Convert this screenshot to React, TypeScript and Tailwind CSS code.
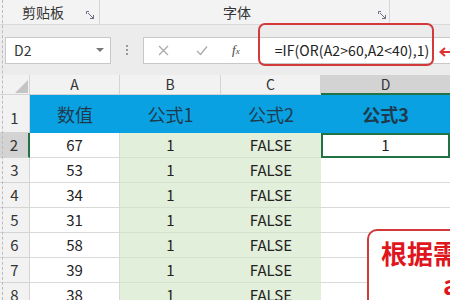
import React from 'react';

const rows = [
  { n: 2, a: '67' },
  { n: 3, a: '53' },
  { n: 4, a: '34' },
  { n: 5, a: '31' },
  { n: 6, a: '58' },
  { n: 7, a: '39' },
  { n: 8, a: '38' },
];

const Launcher = () => (
  <svg width="9" height="9" viewBox="0 0 9 9" className="text-gray-500">
    <path d="M0.5 3V0.5H3" fill="none" stroke="currentColor" />
    <path d="M2 2L7.5 7.5M4 7.5H7.5V4" fill="none" stroke="currentColor" />
  </svg>
);

export default function App() {
  return (
    <div className="relative w-[450px] h-[300px] overflow-hidden bg-white font-['Noto_Sans_CJK_SC','Noto_Sans',sans-serif] text-[#222]">
      {/* ribbon */}
      <div className="grid grid-cols-[22px_64px_14px_123px_155px_12px] items-center h-[25px] bg-[#f3f3f3] border-b border-[#dadada]">
        <div />
        <span className="text-[14px] text-[#333] leading-none">剪贴板</span>
        <span className="self-stretch flex items-end pb-[4px] border-r border-[#d6d6d6]"><Launcher /></span>
        <div />
        <span className="text-[14px] text-[#333] leading-none">字体</span>
        <span className="self-stretch flex items-end pb-[4px] border-r border-[#d6d6d6]"><Launcher /></span>
      </div>

      {/* formula bar */}
      <div className="flex items-center h-[50px] bg-[#ececec] pl-[5px]">
        <div className="w-[106px] h-[27px] bg-white border border-[#c8c8c8] flex items-center pl-[8px] pr-[6px]">
          <span className="text-[14px] text-[#333]">D2</span>
          <span className="ml-auto w-0 h-0 border-l-[4px] border-r-[4px] border-t-[4px] border-l-transparent border-r-transparent border-t-[#777]" />
        </div>
        <div className="w-[32px] flex flex-col items-center gap-[2px]">
          <span className="w-[2px] h-[2px] bg-[#999]" />
          <span className="w-[2px] h-[2px] bg-[#999]" />
          <span className="w-[2px] h-[2px] bg-[#999]" />
        </div>
        <div className="flex-1 h-[27px] bg-white border border-[#c8c8c8] border-r-0 flex items-center">
          <svg width="11" height="11" viewBox="0 0 11 11" className="ml-[14px]">
            <path d="M1 1L10 10M10 1L1 10" stroke="#aaa" strokeWidth="1.3" />
          </svg>
          <svg width="12" height="11" viewBox="0 0 12 11" className="ml-[27px]">
            <path d="M1 6L4.5 9.5L11 1.5" fill="none" stroke="#aaa" strokeWidth="1.3" />
          </svg>
          <span className="ml-[24px] text-[13px] italic font-['Liberation_Serif',serif] text-[#444]">f<span className="text-[9px]">x</span></span>
          <span className="ml-[35px] text-[14px] text-[#222] tracking-[0.1px]">=IF(OR(A2&gt;60,A2&lt;40),1)</span>
        </div>
      </div>

      {/* sheet */}
      <div className="grid grid-cols-[30px_90px_101px_100px_129px] grid-rows-[20px_38px_repeat(7,25px)]">
        <div className="bg-[#f2f2f2] border-r border-b border-[#d4d4d4]" />
        {['A', 'B', 'C'].map((c) => (
          <div key={c} className="bg-[#f2f2f2] border-r border-b border-[#d4d4d4] flex items-center justify-center text-[14px] text-[#333]">{c}</div>
        ))}
        <div className="bg-[#d3d3d3] border-b-2 border-[#217346] flex items-center justify-center text-[14px] text-[#333]">D</div>

        {/* row 1 */}
        <div className="bg-[#f2f2f2] border-r border-b border-[#d4d4d4] flex items-end justify-center pb-[3px] text-[15px] text-[#333]">1</div>
        <div className="bg-[#0aa1e2] flex items-center justify-center text-[18px] text-[#1d3b4d]">数值</div>
        <div className="bg-[#0aa1e2] flex items-center justify-center text-[18px] text-[#1d3b4d]">公式1</div>
        <div className="bg-[#0aa1e2] flex items-center justify-center text-[18px] text-[#1d3b4d]">公式2</div>
        <div className="bg-[#0aa1e2] flex items-center justify-center text-[18px] font-bold text-[#1d3b4d]">公式3</div>

        {rows.map((r) => (
          <React.Fragment key={r.n}>
            <div className={`${r.n === 2 ? 'bg-[#d3d3d3] border-r-2 border-r-[#217346]' : 'bg-[#f2f2f2] border-r border-r-[#d4d4d4]'} border-b border-b-[#d4d4d4] flex items-end justify-center pb-[1px] text-[15px] text-[#333]`}>{r.n}</div>
            <div className="border-r border-b border-[#d9d9d9] flex items-center justify-center text-[15px]">{r.a}</div>
            <div className="bg-[#e2efda] border-b border-[#d6e2cf] flex items-center justify-center text-[15px]">1</div>
            <div className="bg-[#e2efda] border-b border-[#d6e2cf] flex items-center justify-center text-[15px]">FALSE</div>
            {r.n === 2 ? (
              <div className="border-2 border-[#217346] flex items-center justify-center text-[15px]">1</div>
            ) : (
              <div className="border-b border-[#d9d9d9]" />
            )}
          </React.Fragment>
        ))}
      </div>

      {/* dashed left edge */}
      <div className="absolute left-[2px] top-0 h-full border-l border-dashed border-[#bbb]" />

      {/* corner triangle */}
      <svg width="13" height="13" viewBox="0 0 13 13" className="absolute left-[15px] top-[80px]">
        <path d="M13 0V13H0Z" fill="#c4c4c4" />
      </svg>

      {/* red highlight on formula */}
      <div className="absolute left-[258px] top-[23px] w-[176px] h-[43px] border-2 border-[#d23a3a] rounded-[7px]" />
      <svg width="14" height="10" viewBox="0 0 14 10" className="absolute left-[439px] top-[47px]">
        <path d="M14 5H3M6 1L1.5 5L6 9" fill="none" stroke="#e03030" strokeWidth="2" />
      </svg>

      {/* annotation box */}
      <div className="absolute left-[367px] top-[229px] w-[120px] h-[80px] border-2 border-[#d23a3a] rounded-[10px] bg-white pl-[12px] pt-[6px]">
        <div className="text-[26px] font-bold text-[#e0161e] leading-[32px] whitespace-nowrap">根据需求</div>
        <div className="text-[26px] font-bold text-[#e0161e] leading-[30px] pl-[62px]">a</div>
      </div>
    </div>
  );
}
